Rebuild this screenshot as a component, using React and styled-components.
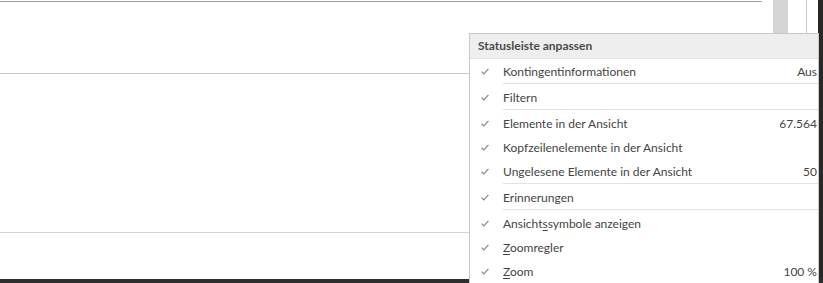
import React from 'react'
import styled, { createGlobalStyle } from 'styled-components'

const GlobalStyle = createGlobalStyle`
  html, body {
    margin: 0;
    padding: 0;
    background: #ffffff;
    overflow: hidden;
  }
`

const items = [
  { label: 'Kontingentinformationen', value: 'Aus', sep: true },
  { label: 'Filtern', sep: true },
  { label: 'Elemente in der Ansicht', value: '67.564' },
  { label: 'Kopfzeilenelemente in der Ansicht' },
  { label: 'Ungelesene Elemente in der Ansicht', value: '50', sep: true },
  { label: 'Erinnerungen', sep: true },
  { label: 'Ansichtssymbole anzeigen', key: 7 },
  { label: 'Zoomregler', key: 0 },
  { label: 'Zoom', key: 0, value: '100 %' },
]

const Check = () => (
  <svg width="8" height="7" viewBox="0 0 8 7">
    <polyline points="0.6,3.6 2.8,5.9 7.4,0.8" fill="none" stroke="#858585" strokeWidth="1.15" />
  </svg>
)

const Label = ({ text, accessKey }) => {
  if (accessKey === undefined) return text
  return (
    <>
      {text.slice(0, accessKey)}
      <u>{text[accessKey]}</u>
      {text.slice(accessKey + 1)}
    </>
  )
}

const App = () => {
  return (
    <Window>
      <GlobalStyle />
      <Body>
        <MainPane>
          <TopBlock />
          <ListBlock />
          <Rest />
        </MainPane>
        <SideStrip>
          <Thumb />
          <Gap />
          <Divider />
          <Gap />
          <Frame />
        </SideStrip>
      </Body>
      <StatusBar />

      <Menu>
        <MenuHeader>Statusleiste anpassen</MenuHeader>
        {items.map((it) => (
          <React.Fragment key={it.label}>
            <MenuItem>
              <CheckCell>
                <Check />
              </CheckCell>
              <ItemText>
                <Label text={it.label} accessKey={it.key} />
              </ItemText>
              {it.value && <ItemValue>{it.value}</ItemValue>}
            </MenuItem>
            {it.sep && <Separator />}
          </React.Fragment>
        ))}
      </Menu>
    </Window>
  )
}

const Window = styled.div`
  position: relative;
  width: 823px;
  height: 283px;
  display: flex;
  flex-direction: column;
  overflow: hidden;
  background: #ffffff;
`

const Body = styled.div`
  flex: 1;
  display: flex;
`

const MainPane = styled.div`
  width: 762px;
  display: flex;
  flex-direction: column;
  padding-top: 1px;
`

const TopBlock = styled.div`
  height: 71px;
  border-top: 1px solid #a2a2a2;
  border-bottom: 1px solid #c3c8d1;
`

const ListBlock = styled.div`
  height: 158px;
  border-bottom: 1px solid #d3d3d3;
`

const Rest = styled.div`
  flex: 1;
`

const SideStrip = styled.div`
  flex: 1;
  display: flex;
  padding-left: 11px;
`

const Thumb = styled.div`
  width: 15px;
  background: #d5d5d5;
`

const Gap = styled.div`
  width: 18px;
  &:nth-of-type(4) {
    width: 11px;
  }
`

const Divider = styled.div`
  width: 1px;
  background: #c6cad3;
`

const Frame = styled.div`
  flex: 1;
  background: #2b2724;
`

const StatusBar = styled.div`
  height: 4px;
  background: #2d2d2d;
`

const Menu = styled.div`
  position: absolute;
  left: 469px;
  top: 33px;
  width: 348px;
  height: 270px;
  background: #ffffff;
  border: 1px solid #c8c8c8;
  font-family: 'Segoe UI', Lato, 'Open Sans', sans-serif;
  font-size: 12px;
  color: #444444;
`

const MenuHeader = styled.div`
  height: 24px;
  line-height: 24px;
  padding-left: 8px;
  background: #eeeeee;
  border-bottom: 1px solid #e2e2e2;
  font-weight: bold;
  color: #4a4a4a;
`

const MenuItem = styled.div`
  height: 24px;
  display: flex;
  align-items: center;
  padding-right: 1px;
`

const CheckCell = styled.div`
  width: 33px;
  display: flex;
  padding-left: 11px;
  box-sizing: border-box;
`

const ItemText = styled.span`
  flex: 1;
  white-space: nowrap;
  u {
    text-underline-offset: 2px;
  }
`

const ItemValue = styled.span`
  white-space: nowrap;
`

const Separator = styled.div`
  height: 1px;
  margin: 0 0 1px 33px;
  background: #e1e1e1;
`

export default App
